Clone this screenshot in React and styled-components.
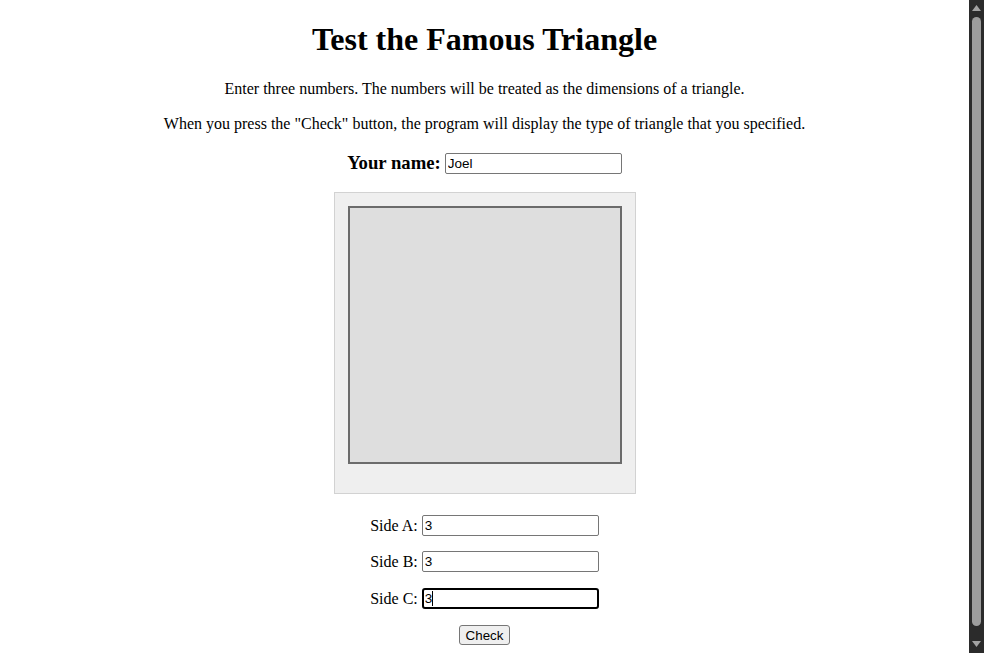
import React from 'react'
import styled, { createGlobalStyle } from 'styled-components'

const GlobalStyle = createGlobalStyle`
  html {
    background: #ffffff;
  }
  body {
    margin: 8px 23px 8px 8px;
    font-family: "Liberation Serif", "Times New Roman", serif;
    color: #000000;
  }
`

const Page = styled.div`
  display: flex;
  flex-direction: column;
  align-items: center;
  text-align: center;
`

const Title = styled.h1`
  font-size: 32px;
  font-weight: bold;
  margin: 13px 0 21px;
  line-height: 37px;
`

const Intro = styled.p`
  font-size: 16px;
  line-height: 18px;
  margin: ${props => props.first ? '1px' : '17px'} 0 0;
`

const NameRow = styled.div`
  display: flex;
  align-items: center;
  gap: 4px;
  margin-top: 19px;
  height: 22px;
`

const NameLabel = styled.label`
  font-size: 18.72px;
  font-weight: bold;
`

const Field = styled.span`
  position: relative;
  display: inline-flex;
`

const Caret = styled.span`
  position: absolute;
  left: 10px;
  top: 3px;
  width: 1px;
  height: 15px;
  background: #000000;
`

const TextInput = styled.input`
  box-sizing: border-box;
  width: 177px;
  height: 21px;
  padding: 1px 2px;
  font-family: "Liberation Sans", Arial, sans-serif;
  font-size: 13.5px;
  color: #000000;
  background: #ffffff;
  border: ${props => props.focused ? '2px solid #000000' : '1px solid #767676'};
  border-radius: ${props => props.focused ? '3px' : '2px'};
  outline: none;
  padding-left: ${props => props.focused ? '1px' : '2px'};
`

const Board = styled.div`
  box-sizing: border-box;
  width: 302px;
  height: 302px;
  margin-top: 18px;
  padding: 13px 0 0 13px;
  background: #efefef;
  border: 1px solid #d2d2d2;
`

const Drawing = styled.div`
  box-sizing: border-box;
  width: 274px;
  height: 258px;
  background: #dedede;
  border: 2px solid #6b6b6b;
`

const SideRow = styled.div`
  display: flex;
  align-items: center;
  gap: 4px;
  height: 21px;
  margin-top: ${props => props.gap}px;
  font-size: 16px;
`

const CheckButton = styled.button`
  box-sizing: border-box;
  margin-top: 16px;
  height: 20px;
  padding: 1px 6px;
  font-family: "Liberation Sans", Arial, sans-serif;
  font-size: 13.33px;
  color: #000000;
  background: #efefef;
  border: 1px solid #767676;
  border-radius: 3px;
  margin-bottom: 16px;
`

const ScrollBar = styled.div`
  position: fixed;
  top: 0;
  right: 0;
  width: 15px;
  height: 100vh;
  background: #2b2b2b;
  display: flex;
  flex-direction: column;
  align-items: center;
`

const ScrollArrow = styled.svg`
  flex: none;
  margin: ${props => props.down ? '15px 0 0' : '5px 0 0'};
`

const ScrollThumb = styled.div`
  flex: 1;
  width: 9px;
  margin-top: 6px;
  max-height: 609px;
  border-radius: 5px;
  background: #9d9d9d;
`

const App = () => {
  const [name, setName] = React.useState('Joel')
  const [sides, setSides] = React.useState({ a: '3', b: '3', c: '3' })

  const handleSide = (key) => (event) => {
    setSides({ ...sides, [key]: event.target.value })
  }

  return (
    <Page>
      <GlobalStyle />
      <Title>Test the Famous Triangle</Title>
      <Intro first>Enter three numbers. The numbers will be treated as the dimensions of a triangle.</Intro>
      <Intro>When you press the "Check" button, the program will display the type of triangle that you specified.</Intro>
      <NameRow>
        <NameLabel>Your name:</NameLabel>
        <TextInput value={name} onChange={e => setName(e.target.value)} />
      </NameRow>
      <Board>
        <Drawing />
      </Board>
      <SideRow gap={21}>
        Side A: <TextInput value={sides.a} onChange={handleSide('a')} />
      </SideRow>
      <SideRow gap={15}>
        Side B: <TextInput value={sides.b} onChange={handleSide('b')} />
      </SideRow>
      <SideRow gap={16}>
        Side C:
        <Field>
          <TextInput focused value={sides.c} onChange={handleSide('c')} />
          <Caret />
        </Field>
      </SideRow>
      <CheckButton>Check</CheckButton>
      <ScrollBar>
        <ScrollArrow width="9" height="6" viewBox="0 0 9 6">
          <polygon points="4.5,0 9,6 0,6" fill="#a3a3a3" />
        </ScrollArrow>
        <ScrollThumb />
        <ScrollArrow down width="9" height="6" viewBox="0 0 9 6">
          <polygon points="0,0 9,0 4.5,6" fill="#a3a3a3" />
        </ScrollArrow>
      </ScrollBar>
    </Page>
  )
}

export default App
